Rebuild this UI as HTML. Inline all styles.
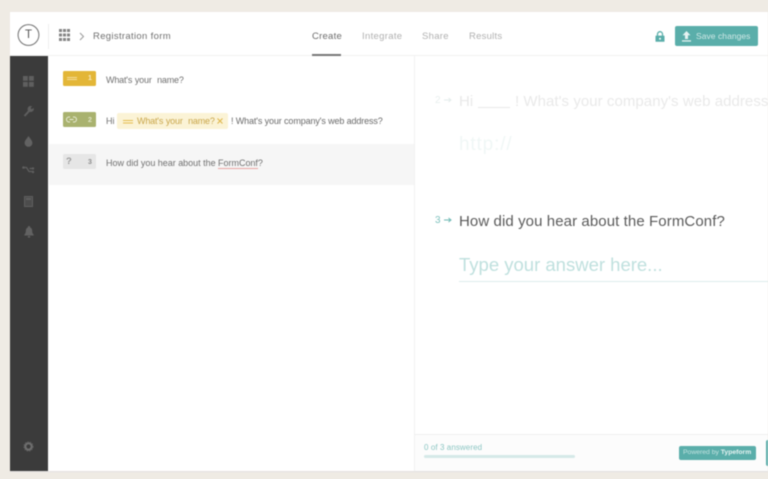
<!DOCTYPE html>
<html lang="en">
<head>
<meta charset="utf-8">
<title>Registration form</title>
<style>
html,body{margin:0;padding:0;width:768px;height:479px;overflow:hidden;background:#efebe4;}
body{font-family:"Liberation Sans",sans-serif;position:relative;}
#s{position:absolute;left:0;top:0;width:768px;height:479px;filter:blur(.6px);overflow:hidden;}
.a{position:absolute;white-space:nowrap;}
.t{position:absolute;white-space:nowrap;line-height:1;}
svg{position:absolute;display:block;overflow:visible;}
</style>
</head>
<body>
<div id="s">
  <!-- app surface -->
  <div class="a" style="left:10px;top:12px;width:758px;height:459px;background:#fff;"></div>
  <div class="a" style="left:10px;top:471px;width:758px;height:1px;background:#e3e1e0;"></div>

  <!-- header -->
  <div class="a" style="left:10px;top:55px;width:758px;height:1px;background:#f1f1f0;"></div>
  <svg style="left:17px;top:23px" width="24" height="24" viewBox="0 0 24 24"><circle cx="11.5" cy="12" r="10.4" fill="none" stroke="#707070" stroke-width="1"/></svg>
  <div class="t" style="left:23.500px;top:29.500px;font-size:11.500px;color:#555;width:10px;text-align:center;">T</div>
  <div class="a" style="left:48px;top:24px;width:1px;height:25px;background:#eeeeee;"></div>
  <svg style="left:59px;top:29px" width="11" height="13" viewBox="0 0 11 13" fill="#858585">
    <rect x="0" y="0" width="3" height="3"/><rect x="4" y="0" width="3" height="3"/><rect x="8" y="0" width="3" height="3"/>
    <rect x="0" y="4.5" width="3" height="3"/><rect x="4" y="4.5" width="3" height="3"/><rect x="8" y="4.5" width="3" height="3"/>
    <rect x="0" y="9" width="3" height="3"/><rect x="4" y="9" width="3" height="3"/><rect x="8" y="9" width="3" height="3"/>
  </svg>
  <svg style="left:79px;top:32px" width="6" height="9" viewBox="0 0 6 9"><path d="M1 1l3.5 3.5L1 8" fill="none" stroke="#999" stroke-width="1"/></svg>
  <div class="t" style="left:93px;top:32px;font-size:9.500px;letter-spacing:.33px;color:#707070;">Registration form</div>

  <div class="t" style="left:312px;top:32px;font-size:9.500px;letter-spacing:.25px;color:#6c6c6c;">Create</div>
  <div class="a" style="left:312px;top:54px;width:29px;height:2px;background:#777;"></div>
  <div class="t" style="left:362px;top:32px;font-size:9.500px;letter-spacing:.32px;color:#b0b0b0;">Integrate</div>
  <div class="t" style="left:422px;top:32px;font-size:9.500px;letter-spacing:.3px;color:#b0b0b0;">Share</div>
  <div class="t" style="left:469px;top:32px;font-size:9.500px;letter-spacing:.25px;color:#b0b0b0;">Results</div>

  <svg style="left:655px;top:31px" width="10" height="11" viewBox="0 0 10 11"><path d="M2.5 5V3.2a2.5 2.5 0 0 1 5 0V5" fill="none" stroke="#5aaeaa" stroke-width="1.3"/><rect x="0.5" y="4.6" width="9" height="6.2" rx=".6" fill="#5aaeaa"/><circle cx="5" cy="7.7" r="1" fill="#fff"/></svg>
  <div class="a" style="left:675px;top:26px;width:83px;height:20px;background:#5aaeaa;border-radius:2px;"></div>
  <svg style="left:681px;top:31px" width="11" height="11" viewBox="0 0 11 11" fill="#e6f3f2"><path d="M5.5 0L9.5 4.2H7V8H4V4.2H1.5z"/><rect x="1" y="9.3" width="9" height="1.3"/></svg>
  <div class="t" style="left:696px;top:32px;font-size:8.500px;letter-spacing:.05px;color:#cfe8e6;">Save changes</div>

  <!-- sidebar -->
  <div class="a" style="left:10px;top:56px;width:38px;height:415px;background:#3b3b3b;"></div>
  <svg style="left:23px;top:76px" width="11" height="11" viewBox="0 0 11 11" fill="#5f5f5f"><rect width="4.8" height="4.8"/><rect x="6" width="4.8" height="4.8"/><rect y="6" width="4.8" height="4.8"/><rect x="6" y="6" width="4.8" height="4.8"/></svg>
  <svg style="left:23px;top:105px" width="12" height="12" viewBox="0 0 12 12"><path d="M1.5 11L6.5 5.5" stroke="#5f5f5f" stroke-width="2" fill="none"/><path d="M6 6.5a3 3 0 0 1 2-5.5l1 .2L7.6 3l1 1.2L10.6 3l.3 1a3.2 3.2 0 0 1-4.900 2.500z" fill="#5f5f5f"/></svg>
  <svg style="left:24px;top:136px" width="9" height="11" viewBox="0 0 9 11"><path d="M4.500 0C3.500 2 .6 4.200.6 7a3.900 3.900 0 0 0 7.800 0C8.400 4.200 5.500 2 4.500 0z" fill="#626262"/></svg>
  <svg style="left:22px;top:166px" width="13" height="10" viewBox="0 0 13 10"><path d="M1 1.500h3.500L7 5.500h4M7.500 2.500h3.500" fill="none" stroke="#5f5f5f" stroke-width="1.300"/><circle cx="1.500" cy="1.500" r="1.300" fill="#5f5f5f"/><circle cx="11" cy="2.500" r="1.200" fill="#5f5f5f"/><circle cx="11" cy="6" r="1.200" fill="#5f5f5f"/></svg>
  <svg style="left:24px;top:196px" width="9" height="11" viewBox="0 0 9 11"><rect x=".5" y=".5" width="8" height="10" fill="#4c4c4c" stroke="#5f5f5f"/><rect x="2" y="2" width="5" height="2" fill="#5f5f5f"/></svg>
  <svg style="left:24px;top:226px" width="10" height="12" viewBox="0 0 10 12" fill="#626262"><path d="M5 0a1 1 0 0 1 1 1.200C7.600 1.800 8.200 3.200 8.200 5c0 2 .8 3 1.500 3.800V9.500H.3v-.7C1 8 1.800 7 1.800 5c0-1.800.6-3.200 2.200-3.800A1 1 0 0 1 5 0z"/><rect x="3.700" y="10" width="2.600" height="1.600" rx=".8"/></svg>
  <svg style="left:23px;top:441px" width="11" height="11" viewBox="0 0 11 11"><circle cx="5.500" cy="5.500" r="3.200" fill="none" stroke="#6d6d6d" stroke-width="2.200"/><circle cx="5.500" cy="5.500" r="4.600" fill="none" stroke="#5e5e5e" stroke-width="1" stroke-dasharray="1.500 1.040"/></svg>

  <!-- question list -->
  <div class="a" style="left:49px;top:144px;width:365px;height:41px;background:#f6f6f6;"></div>

  <div class="a" style="left:63px;top:71px;width:33px;height:15px;background:#e3b637;border-radius:1.500px;"></div>
  <div class="a" style="left:67px;top:77px;width:10px;height:1px;background:#f4dd9c;box-shadow:0 2px 0 #f4dd9c;"></div>
  <div class="t" style="left:88px;top:75px;font-size:7px;font-weight:bold;color:#f8e9bd;">1</div>
  <div class="t" style="left:106px;top:75.500px;font-size:9px;letter-spacing:-.18px;color:#707070;word-spacing:.4px;">What's your&nbsp; name?</div>

  <div class="a" style="left:63px;top:112px;width:33px;height:15px;background:#a9b26f;border-radius:1.500px;"></div>
  <svg style="left:66px;top:116px" width="11" height="7" viewBox="0 0 11 7"><path d="M4 1H3a2.500 2.500 0 0 0 0 5h1M7 1h1a2.500 2.500 0 0 1 0 5H7M3.500 3.500h4" fill="none" stroke="#e9ecd8" stroke-width="1"/></svg>
  <div class="t" style="left:88px;top:116.500px;font-size:7px;font-weight:bold;color:#dfe3c3;">2</div>
  <div class="t" style="left:106px;top:117px;font-size:9px;color:#707070;">Hi</div>
  <div class="a" style="left:117px;top:113px;width:111px;height:16px;background:#fbf3d6;border-radius:2px;"></div>
  <div class="a" style="left:123px;top:119.500px;width:10px;height:1.200px;background:#e5bd4f;box-shadow:0 2.500px 0 #e5bd4f;"></div>
  <div class="t" style="left:137px;top:117px;font-size:9px;letter-spacing:-.18px;color:#c9a64a;word-spacing:.4px;">What's your&nbsp; name?</div>
  <svg style="left:217px;top:118px" width="6" height="6" viewBox="0 0 6 6"><path d="M.5.500l5 5M5.500.500l-5 5" stroke="#e0b84e" stroke-width="1.100"/></svg>
  <div class="t" style="left:231px;top:117px;font-size:9px;letter-spacing:-.12px;color:#6a6a6a;">! What's your company's web address?</div>

  <div class="a" style="left:63px;top:154px;width:33px;height:15px;background:#e6e6e6;border-radius:1.500px;"></div>
  <div class="t" style="left:66px;top:157px;font-size:9.500px;font-weight:bold;color:#999;">?</div>
  <div class="t" style="left:88px;top:158.500px;font-size:7px;font-weight:bold;color:#8e8e8e;">3</div>
  <div class="t" style="left:106px;top:159px;font-size:9px;letter-spacing:-.02px;color:#707070;">How did you hear about the <span style="border-bottom:1px solid #e8a5a3;">FormConf</span>?</div>

  <!-- preview divider -->
  <div class="a" style="left:414px;top:56px;width:1px;height:415px;background:#f1f1f1;"></div>

  <!-- question 2 faded -->
  <div class="t" style="left:435px;top:95.500px;font-size:10px;color:#e8efee;">2</div>
  <svg style="left:444px;top:97px" width="8" height="6" viewBox="0 0 8 6"><path d="M0 3h6M4.500 1l2.500 2-2.500 2" fill="none" stroke="#e4eceb" stroke-width="1"/></svg>
  <div class="t" style="left:459px;top:94px;font-size:15px;letter-spacing:.1px;color:#e9e9e9;">Hi</div>
  <div class="a" style="left:478px;top:107px;width:32px;height:1px;background:#e9e9e9;"></div>
  <div class="t" style="left:515px;top:94px;font-size:15px;letter-spacing:.05px;color:#e9e9e9;">! What's your company's web address?</div>
  <div class="t" style="left:459px;top:135px;font-size:19px;letter-spacing:.85px;color:#f0f7f6;">http://</div>

  <!-- question 3 -->
  <div class="t" style="left:435px;top:215.500px;font-size:10px;color:#7fc2be;">3</div>
  <svg style="left:444px;top:217px" width="8" height="6" viewBox="0 0 8 6"><path d="M0 3h6M4.500 1l2.500 2-2.500 2" fill="none" stroke="#6cb8b3" stroke-width="1"/></svg>
  <div class="t" style="left:459px;top:214px;font-size:15px;letter-spacing:.09px;color:#5a5a5a;">How did you hear about the FormConf?</div>
  <div class="t" style="left:459px;top:256px;font-size:18.500px;letter-spacing:0;color:#bfe0de;">Type your answer here...</div>
  <div class="a" style="left:459px;top:281px;width:309px;height:1px;background:#dcedec;"></div>

  <!-- footer -->
  <div class="a" style="left:415px;top:434px;width:353px;height:37px;background:#fcfcfc;border-top:1px solid #efefef;box-sizing:border-box;"></div>
  <div class="t" style="left:424px;top:444px;font-size:8px;letter-spacing:.08px;color:#8cc6c3;">0 of 3 answered</div>
  <div class="a" style="left:424px;top:455px;width:151px;height:3px;background:#d5e9e8;border-radius:1.500px;"></div>
  <div class="a" style="left:679px;top:446px;width:77px;height:14px;background:#5aaeaa;border-radius:2px;"></div>
  <div class="t" style="left:683px;top:449.500px;font-size:6.800px;letter-spacing:0;color:#c4e3e1;">Powered by <b style="color:#e6f3f2;">Typeform</b></div>
  <div class="a" style="left:766px;top:440px;width:6px;height:26px;background:#5aaeaa;border-radius:2px;"></div>
</div>
</body>
</html>
